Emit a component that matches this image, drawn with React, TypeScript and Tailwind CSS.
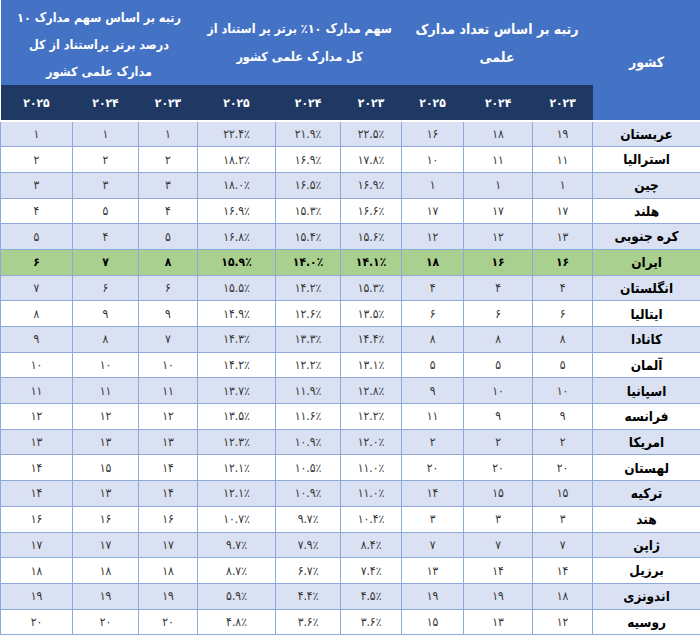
const rows: { name: string; v: string[]; hl?: boolean }[] = [
  { name: "عربستان", v: ["۱۹", "۱۸", "۱۶", "۲۲.۵٪", "۲۱.۹٪", "۲۲.۴٪", "۱", "۱", "۱"] },
  { name: "استرالیا", v: ["۱۱", "۱۱", "۱۰", "۱۷.۸٪", "۱۶.۹٪", "۱۸.۲٪", "۲", "۲", "۲"] },
  { name: "چین", v: ["۱", "۱", "۱", "۱۶.۹٪", "۱۶.۵٪", "۱۸.۰٪", "۳", "۳", "۳"] },
  { name: "هلند", v: ["۱۷", "۱۷", "۱۷", "۱۶.۶٪", "۱۵.۳٪", "۱۶.۹٪", "۴", "۵", "۴"] },
  { name: "کره جنوبی", v: ["۱۳", "۱۲", "۱۲", "۱۵.۶٪", "۱۵.۴٪", "۱۶.۸٪", "۵", "۴", "۵"] },
  { name: "ایران", v: ["۱۶", "۱۶", "۱۸", "۱۴.۱٪", "۱۴.۰٪", "۱۵.۹٪", "۸", "۷", "۶"], hl: true },
  { name: "انگلستان", v: ["۴", "۴", "۴", "۱۵.۳٪", "۱۴.۲٪", "۱۵.۵٪", "۶", "۶", "۷"] },
  { name: "ایتالیا", v: ["۶", "۶", "۶", "۱۳.۵٪", "۱۲.۶٪", "۱۴.۹٪", "۹", "۹", "۸"] },
  { name: "کانادا", v: ["۸", "۸", "۸", "۱۴.۴٪", "۱۳.۳٪", "۱۴.۳٪", "۷", "۸", "۹"] },
  { name: "آلمان", v: ["۵", "۵", "۵", "۱۳.۱٪", "۱۲.۲٪", "۱۴.۲٪", "۱۰", "۱۰", "۱۰"] },
  { name: "اسپانیا", v: ["۱۰", "۱۰", "۹", "۱۲.۸٪", "۱۱.۹٪", "۱۳.۷٪", "۱۱", "۱۱", "۱۱"] },
  { name: "فرانسه", v: ["۹", "۹", "۱۱", "۱۲.۲٪", "۱۱.۶٪", "۱۳.۵٪", "۱۲", "۱۲", "۱۲"] },
  { name: "امریکا", v: ["۲", "۲", "۲", "۱۲.۰٪", "۱۰.۹٪", "۱۲.۳٪", "۱۳", "۱۳", "۱۳"] },
  { name: "لهستان", v: ["۲۰", "۲۰", "۲۰", "۱۱.۰٪", "۱۰.۵٪", "۱۲.۱٪", "۱۴", "۱۵", "۱۴"] },
  { name: "ترکیه", v: ["۱۵", "۱۵", "۱۴", "۱۱.۰٪", "۱۰.۹٪", "۱۲.۱٪", "۱۴", "۱۳", "۱۴"] },
  { name: "هند", v: ["۳", "۳", "۳", "۱۰.۴٪", "۹.۷٪", "۱۰.۷٪", "۱۶", "۱۶", "۱۶"] },
  { name: "ژاپن", v: ["۷", "۷", "۷", "۸.۴٪", "۷.۹٪", "۹.۷٪", "۱۷", "۱۷", "۱۷"] },
  { name: "برزیل", v: ["۱۴", "۱۴", "۱۳", "۷.۴٪", "۶.۷٪", "۸.۷٪", "۱۸", "۱۸", "۱۸"] },
  { name: "اندونزی", v: ["۱۸", "۱۹", "۱۹", "۴.۵٪", "۴.۴٪", "۵.۹٪", "۱۹", "۱۹", "۱۹"] },
  { name: "روسیه", v: ["۱۲", "۱۳", "۱۵", "۳.۶٪", "۳.۶٪", "۴.۸٪", "۲۰", "۲۰", "۲۰"] },
];

const years = ["۲۰۲۳", "۲۰۲۴", "۲۰۲۵", "۲۰۲۳", "۲۰۲۴", "۲۰۲۵", "۲۰۲۳", "۲۰۲۴", "۲۰۲۵"];

export default function App() {
  return (
    <div className="w-[700px] h-[635px] overflow-hidden bg-white font-['DejaVu_Sans_Condensed','DejaVu_Sans',sans-serif]">
      <table dir="rtl" className="w-[700px] table-fixed border-collapse">
        <colgroup>
          <col className="w-[108px]" />
          <col className="w-[60px]" />
          <col className="w-[69px]" />
          <col className="w-[62px]" />
          <col className="w-[61px]" />
          <col className="w-[65px]" />
          <col className="w-[78px]" />
          <col className="w-[59px]" />
          <col className="w-[66px]" />
          <col className="w-[72px]" />
        </colgroup>
        <thead>
          <tr className="bg-[#4472c4] text-white">
            <th rowSpan={2} className="p-0 pt-1 text-[14px] font-bold border-b-2 border-white">
              کشور
            </th>
            {/* group headers */}
            <th colSpan={3} className="p-0 align-middle">
              <div className="h-[85px] flex flex-col justify-center items-center text-[14px] font-bold leading-[28px] whitespace-nowrap">
                <span>رتبه بر اساس تعداد مدارک</span>
                <span>علمی</span>
              </div>
            </th>
            <th colSpan={3} className="p-0 align-middle">
              <div className="h-[85px] flex flex-col justify-center items-center text-[12.5px] font-bold leading-[28px] whitespace-nowrap">
                <span>سهم مدارک ۱۰٪ برتر پر استناد از</span>
                <span>کل مدارک علمی کشور</span>
              </div>
            </th>
            <th colSpan={3} className="p-0 align-middle">
              <div className="h-[85px] flex flex-col justify-center items-center text-[12.5px] font-bold leading-[27px] whitespace-nowrap pt-1">
                <span>رتبه بر اساس سهم مدارک ۱۰</span>
                <span>درصد برتر پراستناد از کل</span>
                <span>مدارک علمی کشور</span>
              </div>
            </th>
          </tr>
          <tr className="bg-[#1f3864] text-white">
            {years.map((y, i) => (
              <th key={i} className="p-0 h-[36px] text-[12px] font-bold border-b-2 border-white">
                {y}
              </th>
            ))}
          </tr>
        </thead>
        <tbody>
          {rows.map((r, i) => {
            const bg = r.hl ? "bg-[#a9d08e]" : i % 2 === 0 ? "bg-[#d9e1f2]" : "bg-white";
            return (
              <tr key={r.name} className={bg}>
                <td className="p-0 h-[25.7px] border border-[#8eaadb] text-center text-[13.5px] font-bold text-black">
                  {r.name}
                </td>
                {r.v.map((c, j) => (
                  <td
                    key={j}
                    className={`p-0 h-[25.7px] border border-[#8eaadb] text-center text-[12px] ${
                      r.hl ? "font-bold text-black" : "text-[#333333]"
                    }`}
                  >
                    {c}
                  </td>
                ))}
              </tr>
            );
          })}
        </tbody>
      </table>
    </div>
  );
}
